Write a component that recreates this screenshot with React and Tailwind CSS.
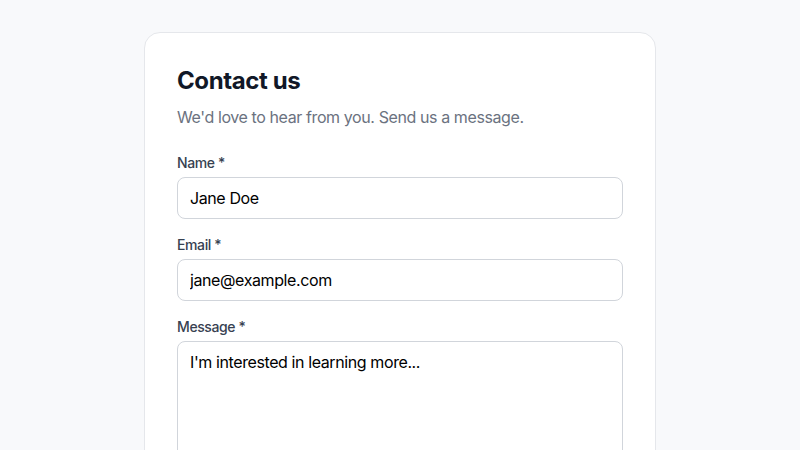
import React from "react";

export default function App() {
  return (
    <div className="min-h-screen bg-[#f8f9fb] pt-8 flex justify-center tracking-tight" style={{ fontFamily: "Inter, 'Noto Sans', sans-serif" }}>
      <div className="w-[512px] bg-white border border-[#e5e7eb] rounded-2xl p-8 self-start">
        <h1 className="text-2xl font-bold text-[#111827] leading-8">Contact us</h1>
        <p className="mt-2 text-base text-[#6b7280] leading-6">We'd love to hear from you. Send us a message.</p>
        <div className="mt-6">
          <label className="block text-sm font-medium text-[#374151] leading-5">Name *</label>
          <input
            className="mt-1 block w-full rounded-lg border border-[#d1d5db] px-3 py-2 text-base leading-6 text-black bg-white outline-none tracking-tight"
            defaultValue="Jane Doe"
          />
        </div>
        <div className="mt-4">
          <label className="block text-sm font-medium text-[#374151] leading-5">Email *</label>
          <input
            className="mt-1 block w-full rounded-lg border border-[#d1d5db] px-3 py-2 text-base leading-6 text-black bg-white outline-none tracking-tight"
            defaultValue="jane@example.com"
          />
        </div>
        <div className="mt-4">
          <label className="block text-sm font-medium text-[#374151] leading-5">Message *</label>
          <textarea
            className="mt-1 block w-full h-[140px] rounded-lg border border-[#d1d5db] px-3 py-2 text-base leading-6 text-black bg-white outline-none resize-none tracking-tight"
            defaultValue="I'm interested in learning more..."
          />
        </div>
        <div className="mt-6">
          <button className="w-full rounded-lg bg-[#111827] text-white py-2 text-base font-medium">Send message</button>
        </div>
      </div>
    </div>
  );
}
